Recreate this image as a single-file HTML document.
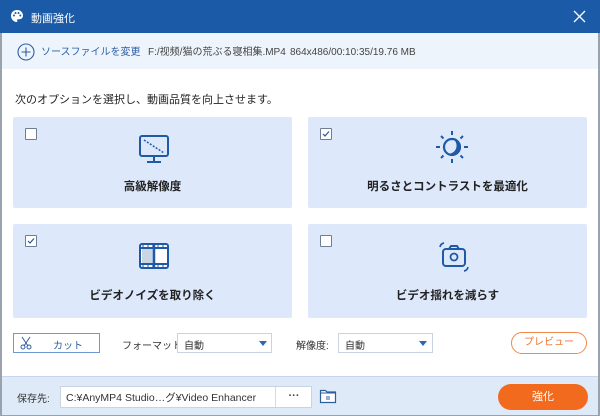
<!DOCTYPE html>
<html><head><meta charset="utf-8"><style>
*{margin:0;padding:0;box-sizing:border-box}
body{width:600px;height:416px;overflow:hidden;background:#fff;font-family:"Liberation Sans","Noto Sans CJK JP",sans-serif;font-size:11px;color:#333;position:relative}
.abs{position:absolute}
#title{left:0;top:0;width:600px;height:33px;background:#1b5aa6;color:#fff}
#frame{left:0;top:33px;width:600px;height:383px;border-left:2px solid #9aa3ad;border-right:2px solid #9aa3ad;border-bottom:1px solid #9aa3ad}
#src{left:2px;top:33px;width:596px;height:36px;background:#eef4fc}
#src div{line-height:14px;white-space:nowrap}
.card{background:#dde9fb;border-radius:2px}
.cb{width:12px;height:12px;border:1px solid #6f7f93;background:#fff;border-radius:1px}
.lbl{font-weight:bold;font-size:11.5px;color:#222;width:100%;text-align:center}
.sel{border:1px solid #c9d4e2;background:#fff;height:20px}
.tri{width:0;height:0;border-left:4px solid transparent;border-right:4px solid transparent;border-top:5px solid #2a66b8}
#foot{left:2px;top:376px;width:596px;height:39px;background:#dfeaf8;border-top:1px solid #c7d6ea}
</style></head><body>
<div class="abs" id="frame"></div>
<div class="abs" id="title">
 <svg class="abs" style="left:10px;top:9px" width="14" height="14" viewBox="0 0 14 14"><path d="M7 1C3.5 1 1 3.5 1 6.8 1 10 3.5 13 6.5 13c1 0 1.2-.7.8-1.3-.5-.7-.2-1.5.7-1.5h1.6C11.5 10.2 13 8.7 13 6.5 13 3.4 10.5 1 7 1z" fill="#fff"/><circle cx="4" cy="6.5" r="1" fill="#1b5aa6"/><circle cx="5.5" cy="4" r="1" fill="#1b5aa6"/><circle cx="8.5" cy="4" r="1" fill="#1b5aa6"/><circle cx="10.3" cy="6.5" r="1" fill="#1b5aa6"/></svg>
 <div class="abs" style="left:31px;top:10px;font-size:11px">動画強化</div>
 <svg class="abs" style="left:573px;top:10px" width="13" height="13" viewBox="0 0 13 13"><path d="M1 1L12 12M12 1L1 12" stroke="#fff" stroke-width="1.3"/></svg>
</div>
<div class="abs" id="src">
 <svg class="abs" style="left:15px;top:10px" width="18" height="18" viewBox="0 0 18 18"><circle cx="9" cy="9" r="8" fill="none" stroke="#2f5e9e" stroke-width="1.1"/><path d="M9 4.5v9M4.5 9h9" stroke="#2f5e9e" stroke-width="1.1"/></svg>
 <div class="abs" style="left:39px;top:13px;color:#2d5fa6;font-size:10px">ソースファイルを変更</div>
 <div class="abs" style="left:146px;top:13px;color:#444;font-size:10px">F:/视频/猫の荒ぶる寝相集.MP4</div>
 <div class="abs" style="left:288px;top:13px;color:#444;font-size:10px">864x486/00:10:35/19.76 MB</div>
</div>
<div class="abs" style="left:15px;top:91px;font-size:11px;color:#222">次のオプションを選択し、動画品質を向上させます。</div>

<div class="abs card" style="left:13px;top:117px;width:279px;height:91px">
 <div class="abs cb" style="left:12px;top:11px"></div>
 <svg class="abs" style="left:125px;top:17px" width="32" height="30" viewBox="0 0 32 30"><rect x="2" y="2" width="28" height="20" rx="2" fill="none" stroke="#1f5aa6" stroke-width="2"/><path d="M6 6L26 19" stroke="#1f5aa6" stroke-width="1.5" stroke-dasharray="2 1.5"/><path d="M16 22v5M9 28h14" stroke="#1f5aa6" stroke-width="2"/></svg>
 <div class="abs lbl" style="left:0;top:61px">高級解像度</div>
</div>
<div class="abs card" style="left:308px;top:117px;width:279px;height:91px">
 <div class="abs cb" style="left:12px;top:11px"><svg width="10" height="10" viewBox="0 0 10 10"><path d="M2 5l2 2 4-4.5" stroke="#1f5aa6" stroke-width="1.2" fill="none"/></svg></div>
 <svg class="abs" style="left:127px;top:12px" width="34" height="36" viewBox="0 0 34 36"><circle cx="17" cy="18" r="8" fill="none" stroke="#1f5aa6" stroke-width="2.2"/><path d="M18 10A8 8 0 0 1 12 24.5 8 8 0 0 0 25 18 8 8 0 0 0 18 10z" fill="#1f5aa6"/><path d="M17 2v4M17 30v4M1 18h4M29 18h4M6 7l2.5 2.5M28 7l-2.5 2.5M6 29l2.5-2.5M28 29l-2.5-2.5" stroke="#1f5aa6" stroke-width="2"/></svg>
 <div class="abs lbl" style="left:0;top:61px">明るさとコントラストを最適化</div>
</div>
<div class="abs card" style="left:13px;top:224px;width:279px;height:94px">
 <div class="abs cb" style="left:12px;top:11px"><svg width="10" height="10" viewBox="0 0 10 10"><path d="M2 5l2 2 4-4.5" stroke="#1f5aa6" stroke-width="1.2" fill="none"/></svg></div>
 <svg class="abs" style="left:125px;top:18px" width="32" height="28" viewBox="0 0 32 28"><rect x="2" y="2" width="28" height="24" rx="2" fill="#fff" stroke="#1f5aa6" stroke-width="2"/><rect x="4" y="7" width="12" height="14" fill="#c9d6e6"/><path d="M2 6h28M2 22h28" stroke="#1f5aa6" stroke-width="2"/><path d="M4 4h2M9 4h2M14 4h2M19 4h2M24 4h2M4 24h2M9 24h2M14 24h2M19 24h2M24 24h2" stroke="#1f5aa6" stroke-width="1"/><path d="M16 2v24" stroke="#1f5aa6" stroke-width="2.5"/></svg>
 <div class="abs lbl" style="left:0;top:63px">ビデオノイズを取り除く</div>
</div>
<div class="abs card" style="left:308px;top:224px;width:279px;height:94px">
 <div class="abs cb" style="left:12px;top:11px"></div>
 <svg class="abs" style="left:129px;top:16px" width="34" height="34" viewBox="0 0 34 34"><rect x="6" y="9" width="22" height="17" rx="3" fill="none" stroke="#1f5aa6" stroke-width="2"/><path d="M12 9l2-3h6l2 3" fill="none" stroke="#1f5aa6" stroke-width="2"/><circle cx="17" cy="17" r="3.5" fill="none" stroke="#1f5aa6" stroke-width="1.8"/><path d="M3 7a5 5 0 0 1 4-4M31 27a5 5 0 0 1-4 4" fill="none" stroke="#1f5aa6" stroke-width="1.7"/></svg>
 <div class="abs lbl" style="left:0;top:63px">ビデオ揺れを減らす</div>
</div>

<div class="abs" style="left:13px;top:333px;width:87px;height:20px;border:1px solid #6e99cf;background:#fff"></div>
<svg class="abs" style="left:19px;top:336px" width="14" height="14" viewBox="0 0 14 14"><path d="M3 1l6 9M11 1L5 10" stroke="#2f5e9e" stroke-width="1"/><circle cx="4" cy="11" r="2" fill="none" stroke="#2f5e9e"/><circle cx="10" cy="11" r="2" fill="none" stroke="#2f5e9e"/></svg>
<div class="abs" style="left:53px;top:337px;font-size:10px;color:#2d5fa6">カット</div>
<div class="abs" style="left:122px;top:337px;font-size:10px">フォーマット:</div>
<div class="abs sel" style="left:177px;top:333px;width:95px"><span class="abs" style="left:6px;top:3px;font-size:10px">自動</span><div class="abs tri" style="left:81px;top:7px"></div></div>
<div class="abs" style="left:296px;top:337px;font-size:10px">解像度:</div>
<div class="abs sel" style="left:338px;top:333px;width:95px"><span class="abs" style="left:6px;top:3px;font-size:10px">自動</span><div class="abs tri" style="left:80px;top:7px"></div></div>
<div class="abs" style="left:511px;top:332px;width:76px;height:22px;border:1px solid #f08a4b;border-radius:11px;background:#fff;color:#ee7430;font-size:10px;text-align:center;line-height:20px">プレビュー</div>

<div class="abs" id="foot">
 <div class="abs" style="left:15px;top:13px;font-size:10px">保存先:</div>
 <div class="abs" style="left:58px;top:9px;width:252px;height:22px;background:#fff;border:1px solid #c9d4e2"></div>
 <div class="abs" style="left:64px;top:13px;font-size:10.5px;color:#333">C:¥AnyMP4 Studio…グ¥Video Enhancer</div>
 <div class="abs" style="left:273px;top:10px;width:1px;height:20px;background:#d2dbe6"></div>
 <div class="abs" style="left:274px;top:10px;width:36px;height:20px;font-size:11px;color:#444;text-align:center;line-height:18px;font-weight:bold">···</div>
 <svg class="abs" style="left:317px;top:11px" width="18" height="16" viewBox="0 0 18 16"><path d="M1.5 2.5h5l1.5 1.5h8.5v10.5h-15z" fill="#fff" stroke="#2f5e9e" stroke-width="1.2"/><path d="M1.5 5h15M7 9h4M7 11h4" stroke="#2f5e9e" stroke-width="1"/></svg>
 <div class="abs" style="left:496px;top:7px;width:90px;height:26px;border-radius:13px;background:#f26a1e;color:#fff;font-size:11px;text-align:center;line-height:26px">強化</div>
</div>
</body></html>
